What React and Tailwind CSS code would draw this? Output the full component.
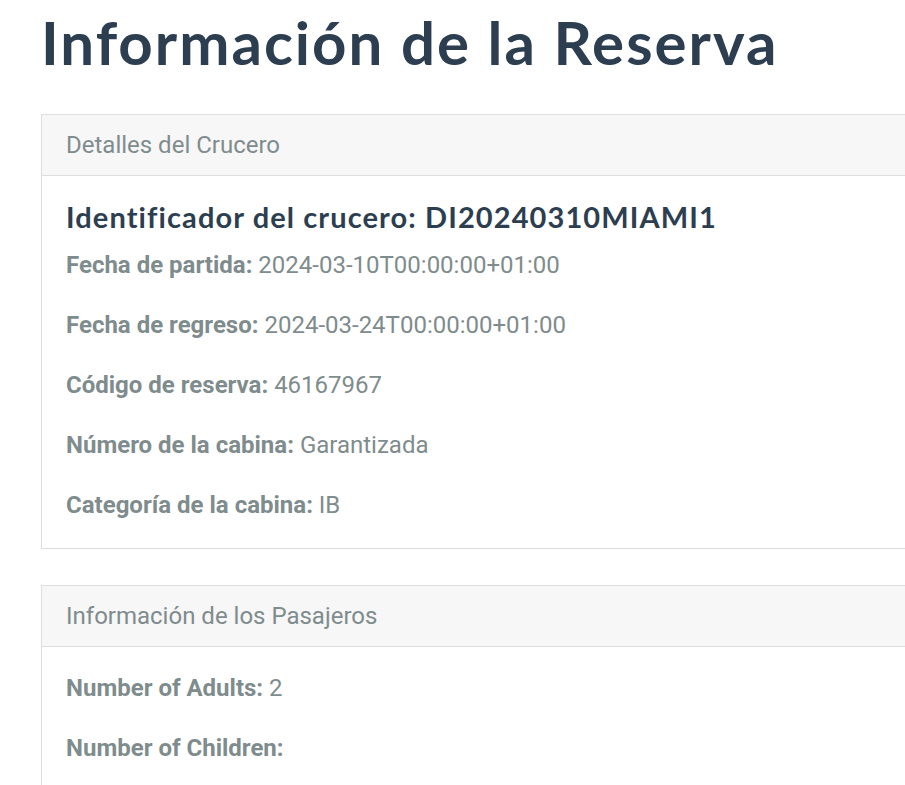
const cruise = [
  ["Fecha de partida:", "2024-03-10T00:00:00+01:00"],
  ["Fecha de regreso:", "2024-03-24T00:00:00+01:00"],
  ["Código de reserva:", "46167967"],
  ["Número de la cabina:", "Garantizada"],
  ["Categoría de la cabina:", "IB"],
];

const passengers = [
  ["Number of Adults:", "2"],
  ["Number of Children:", ""],
];

function Card({ title, bodyClass, children }) {
  return (
    <section className="mb-[36px] w-[1100px] border border-[#dedede] bg-white">
      <div className="border-b border-[#dedede] bg-[#f7f7f7] px-[24px] py-[12px] text-[24px] leading-[36px] text-[#7f8c8d]">
        {title}
      </div>
      <div className={bodyClass}>{children}</div>
    </section>
  );
}

function Row({ label, value }) {
  return (
    <p className="mb-[24px] text-[24px] leading-[36px] text-[#7f8c8d]">
      <strong className="font-bold">{label}</strong> {value}
    </p>
  );
}

export default function App() {
  return (
    <div className="min-h-screen w-full overflow-hidden bg-white font-['Roboto',sans-serif]">
      <div className="pl-[41px] pt-[6px]">
        <h1 className="mb-[36px] font-['Lato',sans-serif] text-[60px] font-bold leading-[72px] tracking-[2px] text-[#2c3e50]">
          Información de la Reserva
        </h1>
        <Card title="Detalles del Crucero" bodyClass="px-[24px] pt-[24px] pb-px">
          <h4 className="mb-[13px] font-['Lato',sans-serif] text-[29px] font-bold leading-[34px] tracking-[1.1px] text-[#2c3e50]">
            Identificador del crucero: DI20240310MIAMI1
          </h4>
          {cruise.map(([l, v]) => (
            <Row key={l} label={l} value={v} />
          ))}
        </Card>
        <Card title="Información de los Pasajeros" bodyClass="px-[24px] pt-[23px]">
          {passengers.map(([l, v]) => (
            <Row key={l} label={l} value={v} />
          ))}
        </Card>
      </div>
    </div>
  );
}
